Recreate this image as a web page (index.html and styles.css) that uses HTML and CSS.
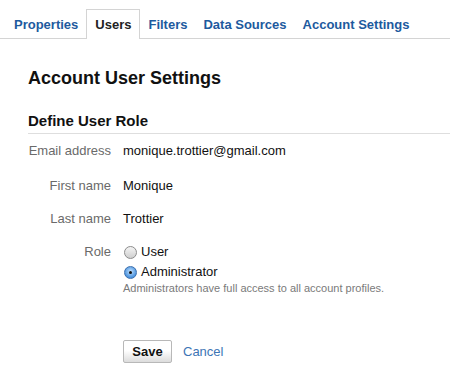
FILE: index.html
```html
<!DOCTYPE html>
<html lang="en">
<head>
    <meta charset="UTF-8">
    <title>Account User Settings</title>
    <link rel="stylesheet" href="styles.css">
</head>
<body>
    <ul class="tabs">
        <li class="tab"><a href="#">Properties</a></li>
        <li class="tab active"><a href="#">Users</a></li>
        <li class="tab"><a href="#">Filters</a></li>
        <li class="tab"><a href="#">Data Sources</a></li>
        <li class="tab"><a href="#">Account Settings</a></li>
    </ul>

    <div class="content">
        <h1>Account User Settings</h1>
        <h2>Define User Role</h2>

        <div class="form">
            <div class="label first">Email address</div>
            <div class="value first">monique.trottier@gmail.com</div>

            <div class="label">First name</div>
            <div class="value">Monique</div>

            <div class="label">Last name</div>
            <div class="value">Trottier</div>

            <div class="label">Role</div>
            <div class="value">
                <label class="radio"><span class="dot"></span>User</label>
                <label class="radio"><span class="dot checked"></span>Administrator</label>
                <div class="hint">Administrators have full access to all account profiles.</div>
            </div>
        </div>

        <div class="actions">
            <button class="save">Save</button>
            <a href="#" class="cancel">Cancel</a>
        </div>
    </div>
</body>
</html>
```

FILE: styles.css
```css
body {
    margin: 0;
    font-family: "Liberation Sans", Arial, sans-serif;
    font-size: 13px;
    color: #111;
    background: white;
}
.tabs {
    list-style: none;
    margin: 0;
    padding: 9px 0 0 6px;
    display: flex;
    border-bottom: 1px solid #d4d4d4;
}
.tab {
    border: 1px solid transparent;
    border-bottom: none;
    margin-bottom: -1px;
    padding: 7px 7px 6px;
    line-height: 16px;
}
.tab a {
    color: #1d5a9e;
    font-weight: bold;
    text-decoration: none;
}
.tab.active {
    border-color: #d4d4d4;
    background: white;
    padding: 7px 8px 6px;
}
.tab.active a {
    color: #222;
}
.content {
    padding-left: 28px;
}
h1 {
    font-size: 18px;
    line-height: 22px;
    margin: 28px 0 23px;
}
h2 {
    font-size: 15px;
    line-height: 18px;
    margin: 0;
    padding-bottom: 3px;
    border-bottom: 1px solid #dedede;
}
.form {
    display: grid;
    grid-template-columns: 83px 1fr;
    column-gap: 12px;
    row-gap: 17px;
    margin-top: 9px;
    line-height: 16px;
}
.label {
    text-align: right;
    color: #6a6a6a;
}
.first {
    padding-bottom: 2px;
}
.radio {
    display: flex;
    align-items: center;
    gap: 4px;
    height: 16px;
    margin-bottom: 4px;
    margin-left: 1px;
}
.dot {
    width: 13px;
    height: 13px;
    border-radius: 50%;
    border: 1px solid #8c8c8c;
    background: linear-gradient(#f4f4f4, #cfcfcf);
    box-sizing: border-box;
    position: relative;
}
.dot.checked {
    border-color: #3b6fae;
    background: radial-gradient(circle at 50% 40%, #bfe0ff, #4c93dd 70%);
}
.dot.checked::after {
    content: "";
    position: absolute;
    left: 4px;
    top: 4px;
    width: 3px;
    height: 3px;
    border-radius: 50%;
    background: #111;
}
.hint {
    font-size: 11px;
    line-height: 14px;
    color: #7a7a7a;
    margin-top: -3px;
}
.actions {
    margin: 45px 0 0 95px;
    display: flex;
    align-items: center;
    gap: 11px;
}
.save {
    font-family: inherit;
    font-size: 13px;
    font-weight: bold;
    color: #111;
    width: 49px;
    height: 23px;
    padding: 0;
    border: 1px solid #b8b8b8;
    border-radius: 2px;
    background: linear-gradient(#ffffff 45%, #dcdcdc);
}
.cancel {
    color: #3d75b5;
    text-decoration: none;
}
```
